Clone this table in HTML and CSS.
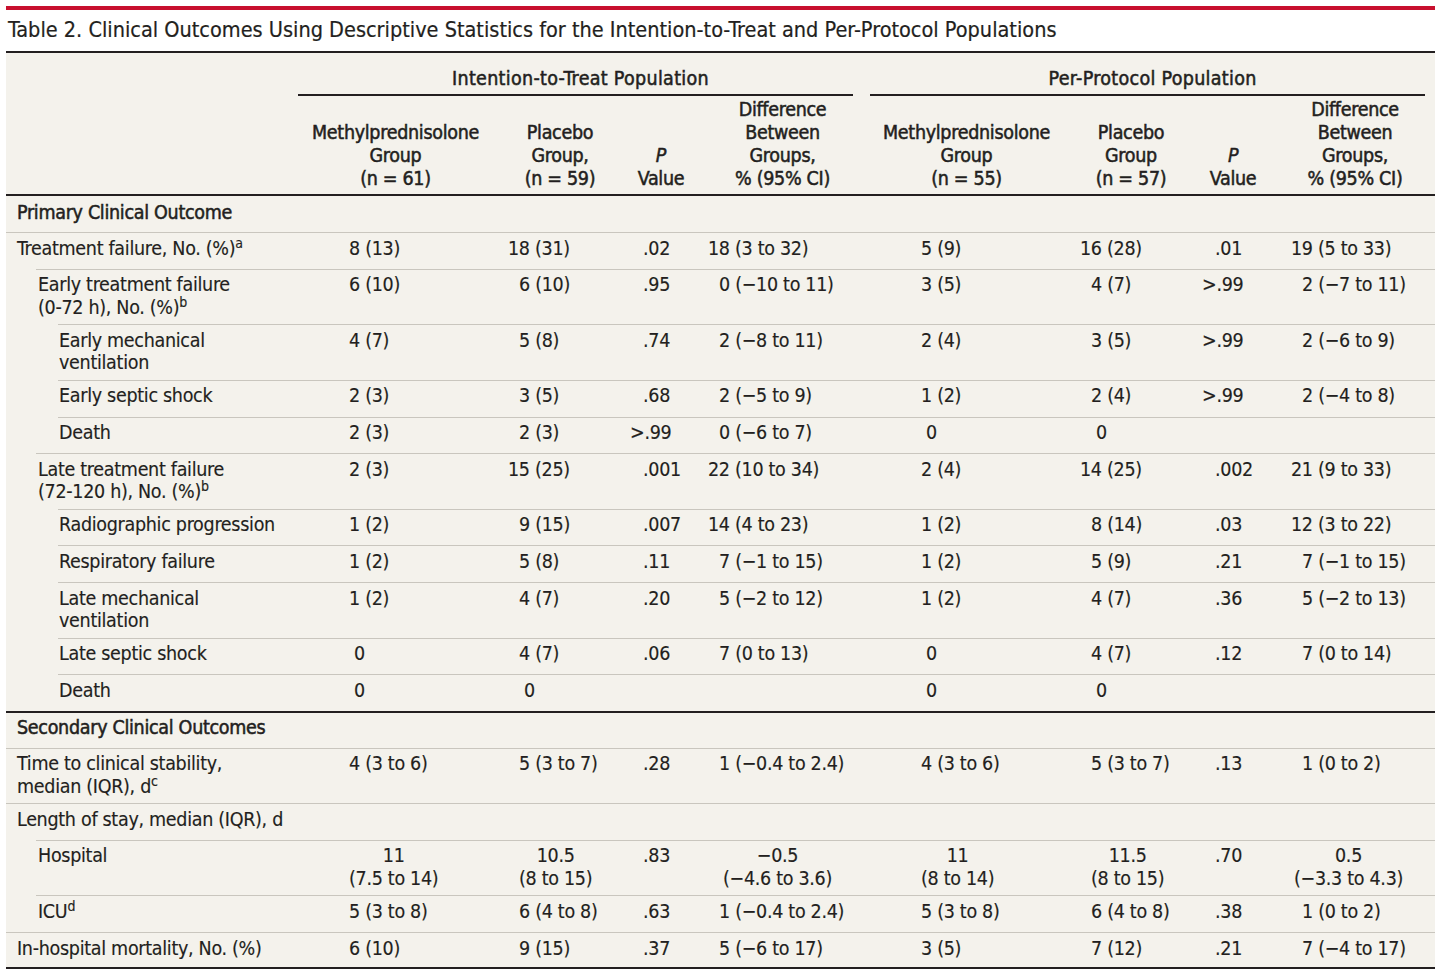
FILE: index.html
```html
<!DOCTYPE html>
<html lang="en">
<head>
<meta charset="utf-8">
<title>Table 2</title>
<link rel="stylesheet" href="styles.css">
</head>
<body>
<div class="page">
  <div class="title">Table 2. Clinical Outcomes Using Descriptive Statistics for the Intention-to-Treat and Per-Protocol Populations</div>
  <table class="tbl">
    <colgroup>
      <col class="c-lab"><col class="c-m"><col class="c-pl"><col class="c-p"><col class="c-d">
      <col class="c-m2"><col class="c-pl2"><col class="c-p"><col class="c-d2">
    </colgroup>
    <thead>
      <tr class="spans">
        <th class="stub" rowspan="2"></th>
        <th class="spanner itt" colspan="4"><div class="rule">Intention-to-Treat Population</div></th>
        <th class="spanner pp" colspan="4"><div class="rule">Per-Protocol Population</div></th>
      </tr>
      <tr class="cols">
        <th>Methylprednisolone<br>Group<br>(n = 61)</th>
        <th>Placebo<br>Group,<br>(n = 59)</th>
        <th><i>P</i><br>Value</th>
        <th>Difference<br>Between<br>Groups,<br>% (95% CI)</th>
        <th>Methylprednisolone<br>Group<br>(n = 55)</th>
        <th>Placebo<br>Group<br>(n = 57)</th>
        <th><i>P</i><br>Value</th>
        <th class="dpp">Difference<br>Between<br>Groups,<br>% (95% CI)</th>
      </tr>
    </thead>
    <tbody>
      <tr class="sec first">
        <td class="l0">Primary Clinical Outcome</td>
        <td></td><td></td><td></td><td></td><td></td><td></td><td></td><td></td>
      </tr>
      <tr>
        <td class="lab l0">Treatment failure, No. (%)<sup>a</sup></td>
        <td>8 (13)</td><td class="w">18 (31)</td><td>.02</td><td class="w">18 (3 to 32)</td>
        <td>5 (9)</td><td class="w">16 (28)</td><td>.01</td><td class="w">19 (5 to 33)</td>
      </tr>
      <tr>
        <td class="lab l1">Early treatment failure<br>(0-72 h), No. (%)<sup>b</sup></td>
        <td>6 (10)</td><td>6 (10)</td><td>.95</td><td>0 (&minus;10 to 11)</td>
        <td>3 (5)</td><td>4 (7)</td><td><span class="gt">&gt;</span>.99</td><td>2 (&minus;7 to 11)</td>
      </tr>
      <tr>
        <td class="lab l2">Early mechanical<br>ventilation</td>
        <td>4 (7)</td><td>5 (8)</td><td>.74</td><td>2 (&minus;8 to 11)</td>
        <td>2 (4)</td><td>3 (5)</td><td><span class="gt">&gt;</span>.99</td><td>2 (&minus;6 to 9)</td>
      </tr>
      <tr>
        <td class="lab l2">Early septic shock</td>
        <td>2 (3)</td><td>3 (5)</td><td>.68</td><td>2 (&minus;5 to 9)</td>
        <td>1 (2)</td><td>2 (4)</td><td><span class="gt">&gt;</span>.99</td><td>2 (&minus;4 to 8)</td>
      </tr>
      <tr>
        <td class="lab l2">Death</td>
        <td>2 (3)</td><td>2 (3)</td><td><span class="gt">&gt;</span>.99</td><td>0 (&minus;6 to 7)</td>
        <td class="z">0</td><td class="z">0</td><td></td><td></td>
      </tr>
      <tr>
        <td class="lab l1">Late treatment failure<br>(72-120 h), No. (%)<sup>b</sup></td>
        <td>2 (3)</td><td class="w">15 (25)</td><td>.001</td><td class="w">22 (10 to 34)</td>
        <td>2 (4)</td><td class="w">14 (25)</td><td>.002</td><td class="w">21 (9 to 33)</td>
      </tr>
      <tr>
        <td class="lab l2">Radiographic progression</td>
        <td>1 (2)</td><td>9 (15)</td><td>.007</td><td class="w">14 (4 to 23)</td>
        <td>1 (2)</td><td>8 (14)</td><td>.03</td><td class="w">12 (3 to 22)</td>
      </tr>
      <tr>
        <td class="lab l2">Respiratory failure</td>
        <td>1 (2)</td><td>5 (8)</td><td>.11</td><td>7 (&minus;1 to 15)</td>
        <td>1 (2)</td><td>5 (9)</td><td>.21</td><td>7 (&minus;1 to 15)</td>
      </tr>
      <tr>
        <td class="lab l2">Late mechanical<br>ventilation</td>
        <td>1 (2)</td><td>4 (7)</td><td>.20</td><td>5 (&minus;2 to 12)</td>
        <td>1 (2)</td><td>4 (7)</td><td>.36</td><td>5 (&minus;2 to 13)</td>
      </tr>
      <tr>
        <td class="lab l2">Late septic shock</td>
        <td class="z">0</td><td>4 (7)</td><td>.06</td><td>7 (0 to 13)</td>
        <td class="z">0</td><td>4 (7)</td><td>.12</td><td>7 (0 to 14)</td>
      </tr>
      <tr>
        <td class="lab l2">Death</td>
        <td class="z">0</td><td class="z">0</td><td></td><td></td>
        <td class="z">0</td><td class="z">0</td><td></td><td></td>
      </tr>
      <tr class="sec second">
        <td class="l0">Secondary Clinical Outcomes</td>
        <td></td><td></td><td></td><td></td><td></td><td></td><td></td><td></td>
      </tr>
      <tr>
        <td class="lab l0">Time to clinical stability,<br>median (IQR), d<sup>c</sup></td>
        <td>4 (3 to 6)</td><td>5 (3 to 7)</td><td>.28</td><td>1 (&minus;0.4 to 2.4)</td>
        <td>4 (3 to 6)</td><td>5 (3 to 7)</td><td>.13</td><td>1 (0 to 2)</td>
      </tr>
      <tr>
        <td class="lab l0">Length of stay, median (IQR), d</td>
        <td></td><td></td><td></td><td></td><td></td><td></td><td></td><td></td>
      </tr>
      <tr>
        <td class="lab l1">Hospital</td>
        <td><span class="stack">11<br>(7.5 to 14)</span></td>
        <td><span class="stack">10.5<br>(8 to 15)</span></td>
        <td>.83</td>
        <td class="sd"><span class="stack">&minus;0.5<br>(&minus;4.6 to 3.6)</span></td>
        <td><span class="stack">11<br>(8 to 14)</span></td>
        <td><span class="stack">11.5<br>(8 to 15)</span></td>
        <td>.70</td>
        <td class="sd2"><span class="stack">0.5<br>(&minus;3.3 to 4.3)</span></td>
      </tr>
      <tr>
        <td class="lab l1">ICU<sup>d</sup></td>
        <td>5 (3 to 8)</td><td>6 (4 to 8)</td><td>.63</td><td>1 (&minus;0.4 to 2.4)</td>
        <td>5 (3 to 8)</td><td>6 (4 to 8)</td><td>.38</td><td>1 (0 to 2)</td>
      </tr>
      <tr class="last">
        <td class="lab l0">In-hospital mortality, No. (%)</td>
        <td>6 (10)</td><td>9 (15)</td><td>.37</td><td>5 (&minus;6 to 17)</td>
        <td>3 (5)</td><td>7 (12)</td><td>.21</td><td>7 (&minus;4 to 17)</td>
      </tr>
    </tbody>
  </table>
</div>
</body>
</html>
```

FILE: styles.css
```css
* { box-sizing: border-box; }

body {
  margin: 0;
  background: #ffffff;
  color: #231f20;
  font-family: "DejaVu Sans Condensed", "DejaVu Sans", sans-serif;
  font-stretch: condensed;
}

.page {
  width: 1435px;
  padding: 6px 0 0 6px;
}

.title {
  font-size: 21.5px;
  line-height: 24px;
  padding: 8px 0 9px 2px;
  border-top: 4px solid #c8102e;
  border-bottom: 2px solid #231f20;
  white-space: nowrap;
  -webkit-text-stroke: 0.2px #231f20;
}

.tbl {
  width: 1429px;
  table-layout: fixed;
  border-collapse: separate;
  border-spacing: 0;
  background: #f4f2ec;
  font-size: 19.5px;
  line-height: 22.5px;
  letter-spacing: -0.3px;
}

.c-lab { width: 292px; }
.c-m { width: 195px; }
.c-pl { width: 134px; }
.c-p { width: 68px; }
.c-d { width: 175px; }
.c-m2 { width: 193px; }
.c-pl2 { width: 136px; }
.c-d2 { width: 168px; }

thead th {
  font-weight: normal;
  -webkit-text-stroke: 0.5px #231f20;
  padding: 0;
}

.stub {
  border-bottom: 2px solid #231f20;
}

.spanner {
  padding-top: 14px;
  vertical-align: top;
  text-align: center;
}

.spanner.itt { padding-right: 17px; }
.spanner.pp { padding-right: 10px; }

.rule {
  line-height: 23px;
  letter-spacing: 0.3px;
  padding: 0 0 4px 10px;
  border-bottom: 2px solid #231f20;
}

.cols th {
  padding: 2px 0 4px;
  line-height: 23px;
  text-align: center;
  vertical-align: bottom;
  border-bottom: 2px solid #231f20;
}

.cols th.dpp { padding-left: 8px; }

tbody tr { height: 36.6px; }

tbody td {
  vertical-align: top;
  padding: 4.5px 0 5.2px;
  border-top: 1px solid #c9c6be;
  white-space: nowrap;
  -webkit-text-stroke: 0.15px #231f20;
}

tbody td:nth-child(2) { padding-left: 51px; }
tbody td:nth-child(3) { padding-left: 26px; }
tbody td:nth-child(4) { padding-left: 16px; }
tbody td:nth-child(5) { padding-left: 24px; }
tbody td:nth-child(6) { padding-left: 51px; }
tbody td:nth-child(7) { padding-left: 28px; }
tbody td:nth-child(8) { padding-left: 16px; }
tbody td:nth-child(9) { padding-left: 35px; }

td.lab {
  border-top-color: transparent;
  background: linear-gradient(#c9c6be, #c9c6be) no-repeat right top / 100% 1px;
  background-origin: border-box;
}

tbody td.l0 { padding-left: 11px; }
tbody td.l1 { padding-left: 32px; background-size: calc(100% - 30px) 1px; }
tbody td.l2 { padding-left: 53px; background-size: calc(100% - 52px) 1px; }

tr.sec td {
  font-weight: normal;
  -webkit-text-stroke: 0.5px #231f20;
}
tr.sec.first { height: 36px; }
tr.sec.first td { border-top: 0; padding-top: 5.5px; }
tr.sec.second td { border-top: 2px solid #231f20; }

tr.last td { border-bottom: 2px solid #231f20; }

td.w { text-indent: -11px; }
td.z { text-indent: 5px; }
td.sd { text-indent: 4px; }
td.sd2 { text-indent: -8px; }

.gt { margin-left: -13px; }

.stack {
  display: inline-block;
  text-align: center;
  text-indent: 0;
}

sup {
  font-size: 14px;
  line-height: 0;
  vertical-align: 7px;
  letter-spacing: 0;
}
```
